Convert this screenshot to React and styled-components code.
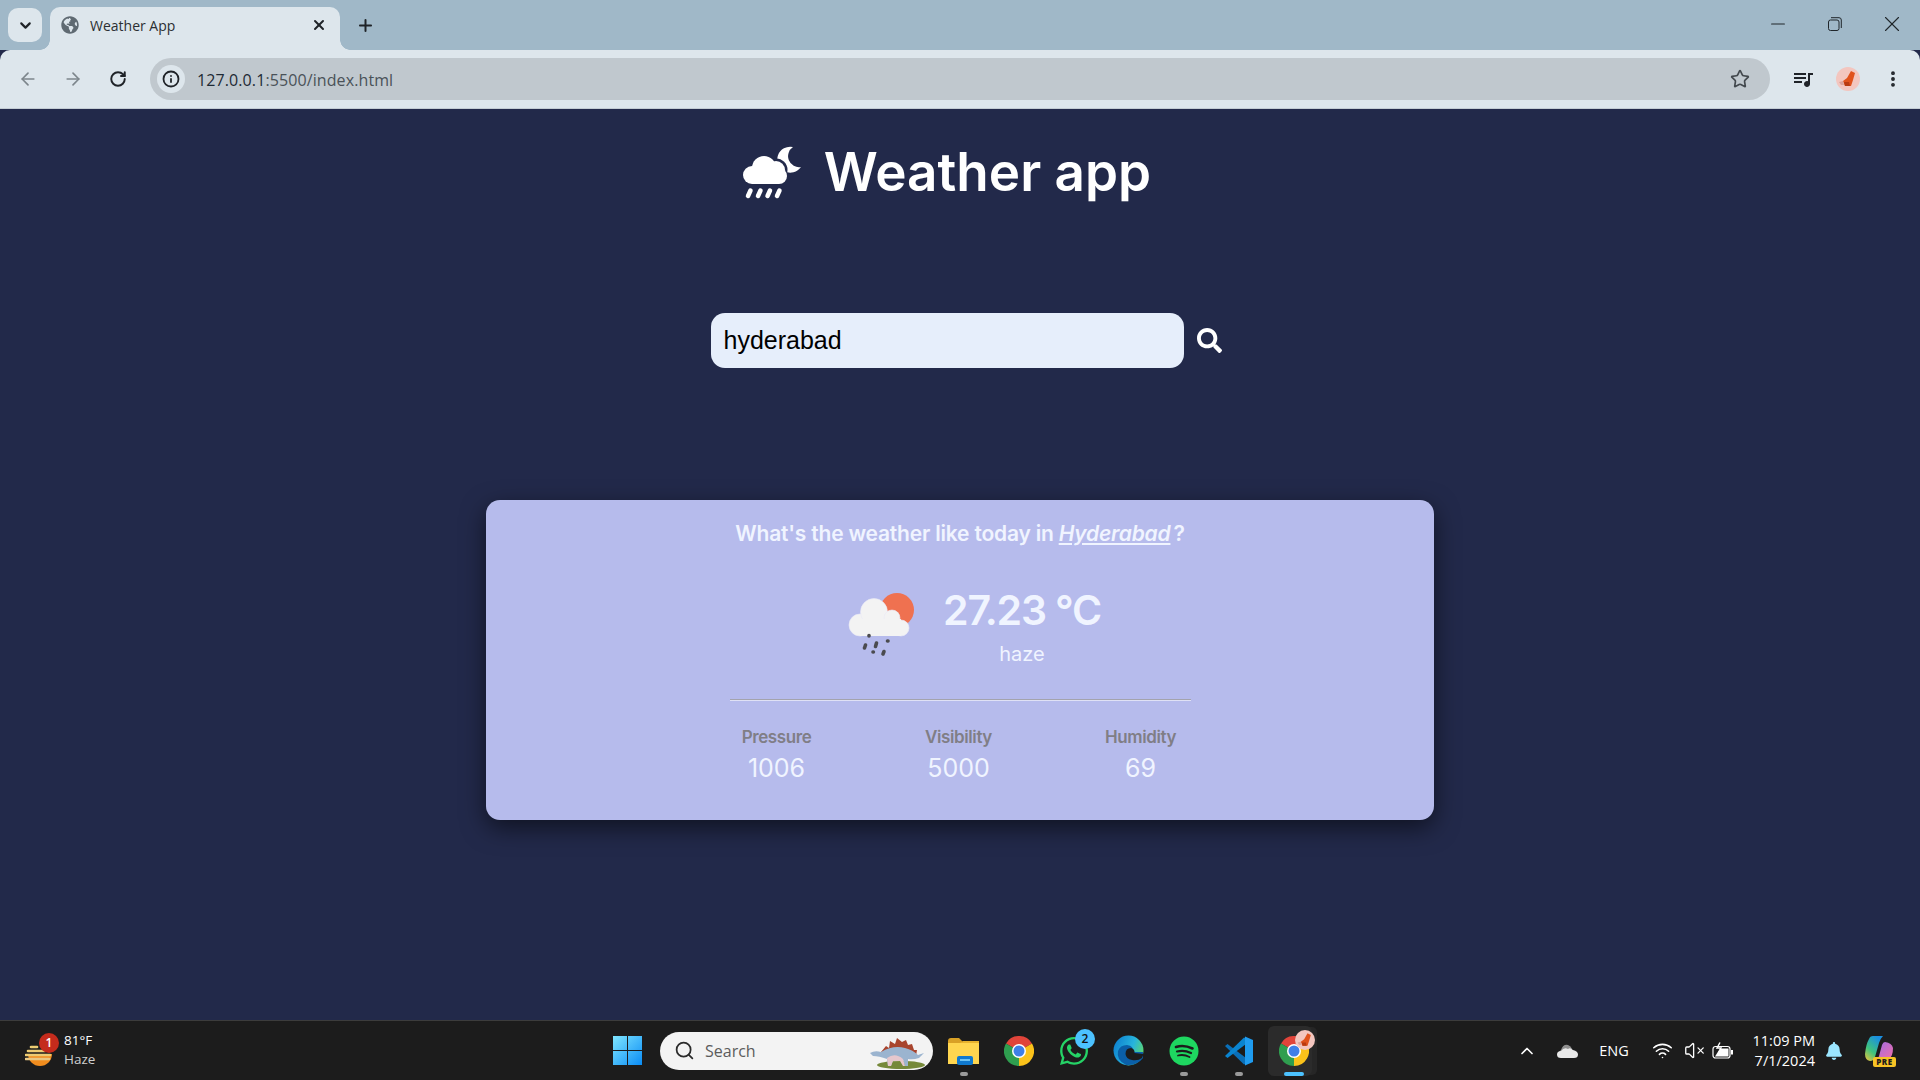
import React from 'react';
import styled, { createGlobalStyle } from 'styled-components';
import {
  ArrowLeft, ArrowRight, RotateCw, Star, EllipsisVertical, X, Plus, ChevronDown, ChevronUp,
  Minus, Search, Wifi, VolumeX, Info,
} from 'lucide-react';
import { FaSearch, FaWhatsapp, FaGlobeAmericas, FaBell } from 'react-icons/fa';
import { MdQueueMusic } from 'react-icons/md';

const GlobalStyle = createGlobalStyle`
  html, body { margin: 0; padding: 0; height: 100%; background: #22294a; }
  * { box-sizing: border-box; }
  #root { height: 1080px; }
`;

const Screen = styled.div`
  width: 1920px;
  height: 1080px;
  display: flex;
  flex-direction: column;
  overflow: hidden;
  font-family: 'Inter', sans-serif;
`;

/* browser chrome */
const TabStrip = styled.div`
  height: 50px;
  background: #a0b8c8;
  display: flex;
  align-items: flex-end;
  padding-left: 8px;
`;

const TabMenu = styled.div`
  width: 34px;
  height: 34px;
  margin-bottom: 8px;
  border-radius: 10px;
  background: #dde6ec;
  color: #1f2328;
  display: flex;
  align-items: center;
  justify-content: center;
`;

const Tab = styled.div`
  position: relative;
  width: 290px;
  height: 43px;
  margin-left: 8px;
  padding: 0 13px 7px 11px;
  background: #dde6ec;
  border-radius: 10px 10px 0 0;
  display: flex;
  align-items: center;
  color: #5f6a72;
  &:before, &:after {
    content: '';
    position: absolute;
    bottom: 0;
    width: 10px;
    height: 10px;
  }
  &:before {
    left: -10px;
    background: radial-gradient(circle at 0 0, #a0b8c8 9.5px, #dde6ec 10px);
  }
  &:after {
    right: -10px;
    background: radial-gradient(circle at 100% 0, #a0b8c8 9.5px, #dde6ec 10px);
  }
`;

const TabTitle = styled.span`
  flex: 1;
  margin-left: 11px;
  font: 14px 'Open Sans', sans-serif;
  color: #2b2f33;
`;

const NewTab = styled.div`
  width: 30px;
  height: 30px;
  margin: 0 0 10px 10px;
  color: #1f2328;
  display: flex;
  align-items: center;
  justify-content: center;
`;

const WindowButtons = styled.div`
  margin-left: auto;
  height: 50px;
  display: flex;
  align-items: center;
  color: #20262b;
`;

const WindowButton = styled.div`
  width: 57px;
  height: 40px;
  margin-bottom: 2px;
  display: flex;
  align-items: center;
  justify-content: center;
`;

const Toolbar = styled.div`
  position: relative;
  height: 59px;
  background: #dde6ec;
  border-radius: 10px 10px 0 0;
  border-bottom: 1px solid #c3ccd3;
  display: flex;
  align-items: center;
  padding: 0 0 1px 0;
`;

const NavButton = styled.div`
  width: 45px;
  height: 40px;
  flex: none;
  display: flex;
  align-items: center;
  justify-content: center;
  color: ${props => props.$dim ? '#7d868c' : '#1f2328'};
`;

const NavGroup = styled.div`
  display: flex;
  padding-left: 5px;
  width: 150px;
`;

const Omnibox = styled.div`
  width: 1620px;
  height: 42px;
  border-radius: 21px;
  background: #c0c8ce;
  display: flex;
  align-items: center;
  padding: 0 20px 0 7px;
`;

const InfoChip = styled.div`
  width: 28px;
  height: 28px;
  border-radius: 50%;
  background: #dde6ec;
  color: #1f2328;
  display: flex;
  align-items: center;
  justify-content: center;
`;

const UrlText = styled.span`
  margin-left: 12px;
  padding-top: 2px;
  flex: 1;
  font: 16px 'Open Sans', sans-serif;
  color: #1e2a35;
  letter-spacing: 0.1px;
  span { color: #4a5258; }
`;

const ToolIcons = styled.div`
  display: flex;
  align-items: center;
  margin-left: 10px;
  color: #1f2328;
`;

const ToolIcon = styled.div`
  width: 45px;
  height: 40px;
  display: flex;
  align-items: center;
  justify-content: center;
`;

/* page */
const Main = styled.main`
  flex: 1;
  background: #22294a;
  display: flex;
  flex-direction: column;
  align-items: center;
`;

const Header = styled.header`
  height: 80px;
  margin-top: 23px;
  padding-right: 26px;
  display: flex;
  align-items: center;
  gap: 23px;
`;

const Title = styled.h1`
  margin: 0;
  font-family: 'Inter', sans-serif;
  font-size: 53px;
  font-weight: 600;
  letter-spacing: 0;
  line-height: 80px;
  color: #fff;
`;

const SearchRow = styled.form`
  margin-top: 101px;
  padding-left: 12px;
  display: flex;
  align-items: center;
  gap: 13px;
  color: #fff;
`;

const CityInput = styled.input`
  width: 473px;
  height: 55px;
  border: 0;
  outline: 0;
  border-radius: 14px;
  padding: 0 13px;
  background: #e6eefb;
  color: #000;
  font: 25px 'Liberation Sans', Arial, sans-serif;
`;

const Card = styled.section`
  width: 948px;
  height: 320px;
  margin-top: 132px;
  padding-top: 20px;
  border-radius: 14px;
  background: #b6bbec;
  box-shadow: 0 8px 24px rgba(0, 0, 0, 0.55);
  display: flex;
  flex-direction: column;
  align-items: center;
`;

const Question = styled.h2`
  margin: 0;
  height: 28px;
  font-size: 21px;
  line-height: 28px;
  font-weight: 600;
  letter-spacing: -0.2px;
  color: #f0f4ff;
  em { text-decoration: underline; margin-right: 3px; }
`;

const NowRow = styled.div`
  margin-top: 34px;
  margin-left: 28px;
  display: flex;
  gap: 28px;
`;

const IconSlot = styled.div`
  margin-top: 9px;
  line-height: 0;
`;

const NowText = styled.div`
  width: 156px;
  display: flex;
  flex-direction: column;
  align-items: center;
`;

const Temp = styled.div`
  height: 56px;
  font-size: 41px;
  line-height: 56px;
  font-weight: 600;
  letter-spacing: -1.2px;
  white-space: nowrap;
  color: #f0f4ff;
`;

const Condition = styled.div`
  margin-top: 4px;
  font-size: 20px;
  line-height: 24px;
  color: #f0f4ff;
`;

const Divider = styled.hr`
  width: 461px;
  height: 1px;
  margin: 33px 0 0;
  border: 0;
  background: #a3a3ad;
  box-shadow: 0 1px 0 #dfe1f5;
`;

const Stats = styled.div`
  margin-top: 25px;
  margin-right: 3px;
  display: grid;
  grid-template-columns: repeat(3, 182px);
`;

const Stat = styled.div`
  display: flex;
  flex-direction: column;
  align-items: center;
`;

const StatLabel = styled.div`
  font-size: 17px;
  line-height: 24px;
  font-weight: 600;
  letter-spacing: -0.4px;
  color: #807e86;
`;

const StatValue = styled.div`
  margin-top: 4px;
  font-size: 25px;
  line-height: 30px;
  color: #f0f4ff;
`;

/* taskbar */
const Taskbar = styled.footer`
  position: relative;
  height: 60px;
  background: #1c1c1c;
  border-top: 1px solid #3c3c3c;
  display: grid;
  grid-template-columns: 613px 1fr auto;
  color: #fff;
  font-family: 'Open Sans', sans-serif;
`;

const WeatherWidget = styled.div`
  padding-left: 25px;
  display: flex;
  align-items: center;
  gap: 9px;
`;

const WidgetIcon = styled.div`
  position: relative;
  width: 30px;
  height: 30px;
`;

const CountBadge = styled.span`
  position: absolute;
  top: ${props => props.$top}px;
  right: ${props => props.$right}px;
  width: 20px;
  height: 20px;
  border-radius: 50%;
  background: ${props => props.$bg};
  color: ${props => props.$fg};
  font: 600 12px/20px 'Open Sans', sans-serif;
  text-align: center;
`;

const WidgetText = styled.div`
  font-size: 13.5px;
  line-height: 19px;
  margin-top: -2px;
  span { display: block; color: #cfcfcf; }
`;

const TaskCenter = styled.div`
  display: flex;
  align-items: center;
`;

const SearchPill = styled.div`
  width: 273px;
  height: 38px;
  margin-left: 18px;
  margin-right: 3px;
  padding: 0 7px 0 14px;
  border-radius: 19px;
  background: #f3f3f3;
  color: #2b2b2b;
  display: flex;
  align-items: center;
`;

const PillText = styled.span`
  flex: 1;
  margin-left: 10px;
  font-size: 16px;
  color: #5c5c5c;
`;

const TaskItem = styled.div`
  position: relative;
  width: 55px;
  height: 50px;
  flex: none;
  display: flex;
  align-items: center;
  justify-content: center;
  &:before {
    content: '';
    display: ${props => props.$active ? 'block' : 'none'};
    position: absolute;
    top: 0;
    bottom: 0;
    left: 2px;
    right: 9px;
    border-radius: 6px;
    background: #2b2b2b;
    box-shadow: 6px 0 0 -1px #262626;
  }
  > svg { position: relative; }
  &:after {
    content: '';
    display: ${props => props.$dot ? 'block' : 'none'};
    position: absolute;
    left: 50%;
    bottom: 0;
    transform: translateX(-50%);
    width: ${props => props.$active ? '20px' : '8px'};
    height: 4px;
    border-radius: 2px;
    background: ${props => props.$active ? '#4cc2ff' : '#9a9a9a'};
  }
`;

const Tray = styled.div`
  display: flex;
  align-items: center;
  padding-right: 25px;
`;

const TrayIcon = styled.div`
  width: ${props => props.$w}px;
  display: flex;
  justify-content: center;
  font-size: 14.5px;
  color: #fff;
`;

const Clock = styled.div`
  width: 80px;
  text-align: right;
  font-size: 14.5px;
  line-height: 20px;
  padding-right: 1px;
  margin-right: 4px;
`;

const PreTag = styled.span`
  position: absolute;
  right: -1px;
  bottom: -1px;
  width: 23px;
  height: 10px;
  border-radius: 2px;
  background: #f7c325;
  color: #1c1c1c;
  font: 800 8px/10px 'Open Sans', sans-serif;
  letter-spacing: 0.5px;
  text-align: center;
`;

const CopilotBox = styled.div`
  position: relative;
  width: 30px;
  height: 30px;
  margin-left: 17px;
`;

const Corner = styled.div`
  position: absolute;
  top: ${props => props.$top}px;
  left: ${props => props.$left}px;
  line-height: 0;
`;

/* drawings */
const LogoIcon = () => (
  <svg width="58" height="53" viewBox="0 0 58 53">
    <path d="M50 1 A13 13 0 1 0 58 21 A11 11 0 0 1 50 1 Z" fill="#fff" />
    <circle cx="33" cy="24" r="11.5" fill="#22294a" />
    <g fill="#fff">
      <circle cx="9" cy="29" r="9" />
      <circle cx="21" cy="22" r="12" />
      <circle cx="33" cy="24" r="9" />
      <circle cx="36" cy="30" r="8" />
      <rect x="9" y="25" width="27" height="13" />
    </g>
    <g stroke="#fff" strokeWidth="4.5" strokeLinecap="round">
      <path d="M5 50 L7.5 44.5" />
      <path d="M15 50 L17.5 44.5" />
      <path d="M24.5 50 L27 44.5" />
      <path d="M34 50 L36.5 44.5" />
    </g>
  </svg>
);

const HazeIcon = () => (
  <svg width="68" height="66" viewBox="18 20 68 66">
    <circle cx="67" cy="39" r="17" fill="#ef7150" />
    <g fill="#f3f3f3" stroke="#e9e9f6" strokeWidth="0.6">
      <circle cx="30" cy="54" r="11" />
      <circle cx="44" cy="41" r="13.5" />
      <circle cx="62" cy="47" r="8" />
      <circle cx="71" cy="57" r="8" />
      <rect x="30" y="48" width="41" height="17" strokeWidth="0" />
    </g>
    <g stroke="#4b4b4f" strokeWidth="3.6" strokeLinecap="round">
      <path d="M39 64.5 L39 65" />
      <path d="M34.5 77 L35.5 74" />
      <path d="M45.5 75.5 L46.5 72" />
      <path d="M57.5 70 L58 70" />
      <path d="M43 81 L43.4 81" />
      <path d="M53 83 L54 80.5" />
    </g>
  </svg>
);

const HazeSmall = () => (
  <svg width="30" height="30" viewBox="0 0 30 30">
    <path d="M3 17 H27 A12 12 0 0 1 3 17 Z" fill="#f08c1e" transform="translate(0,1)" />
    <g stroke="#eccb72" strokeWidth="2.6" strokeLinecap="round">
      <path d="M6 11 H12" />
      <path d="M3 15 H20" />
      <path d="M1 19 H25" />
      <path d="M1 23 H24" stroke="#e8c884" />
    </g>
  </svg>
);

const WindowsLogo = () => (
  <svg width="29" height="29" viewBox="0 0 29 29">
    <defs>
      <linearGradient id="winGrad" x1="0" y1="0" x2="1" y2="1">
        <stop offset="0" stopColor="#7fe6ff" />
        <stop offset="1" stopColor="#0a8cf5" />
      </linearGradient>
    </defs>
    <path d="M0 0 H14 V14 H0 Z M15 0 H29 V14 H15 Z M0 15 H14 V29 H0 Z M15 15 H29 V29 H15 Z" fill="url(#winGrad)" />
  </svg>
);

const Dino = () => (
  <svg width="57" height="38" viewBox="0 0 57 38">
    <ellipse cx="32" cy="33" rx="24" ry="4" fill="#76893a" />
    <g fill="#a8452e">
      <path d="M12 20 L17 14 L20 16 L21 9 L26 12 L28 6 L33 10 L37 8 L39 13 L43 12 L45 18 L48 18 L47 24 L16 24 Z" />
    </g>
    <path d="M1 21 Q6 18 12 20 Q24 13 36 16 Q44 18 49 23 L55 21 L50 26 Q44 28 39 27 L39 34 L36 34 L34 28 L24 28 L22 34 L19 34 L18 27 Q10 24 4 24 Z" fill="#9bb4cf" />
    <path d="M18 26 Q26 20 34 27 L36 34 L34 34 L31 29 L24 29 L22 34 L19 34 Z" fill="#e6c7cd" />
  </svg>
);

const Explorer = () => (
  <svg width="31" height="28" viewBox="0 0 31 28">
    <path d="M0 4 Q0 1 3 1 H11 L15 5 H29 V12 H0 Z" fill="#d9a126" />
    <path d="M0 6 H31 V27 H0 Z" fill="#ffd64f" />
    <path d="M0 6 H12 L15 4 H31 V6 Z" fill="#e8b32e" />
    <rect x="9" y="19" width="16" height="9" rx="2" fill="#0f79cf" />
    <rect x="12" y="22" width="10" height="2" fill="#6cc3f5" />
  </svg>
);

const ChromeLogo = ({ size = 30 }) => (
  <svg width={size} height={size} viewBox="0 0 30 30">
    <path d="M15 15 L2 7.5 A15 15 0 0 1 28 7.5 Z" fill="#e1443a" />
    <path d="M15 15 L2 7.5 A15 15 0 0 0 15 30 Z" fill="#2f9e4f" />
    <path d="M15 15 L28 7.5 A15 15 0 0 1 15 30 Z" fill="#fbc21a" />
    <circle cx="15" cy="15" r="7" fill="#fff" />
    <circle cx="15" cy="15" r="5.5" fill="#3f7fe8" />
  </svg>
);

const EdgeLogo = () => (
  <svg width="31" height="31" viewBox="0 0 31 31">
    <defs>
      <linearGradient id="edgeGrad" x1="0" y1="0.2" x2="1" y2="0.6">
        <stop offset="0" stopColor="#0d7fd0" />
        <stop offset="0.6" stopColor="#27b4dc" />
        <stop offset="1" stopColor="#5fd86a" />
      </linearGradient>
    </defs>
    <circle cx="15.5" cy="15.5" r="15" fill="url(#edgeGrad)" />
    <path d="M13 30 Q3 25 5 16 Q7 10 14 10 Q21 11 20 17 L30 17 L30 23 Q24 31 13 30 Z" fill="#0a5fa8" />
    <path d="M12.5 19 Q12.5 13 18 13 Q22 14 21.5 18 L30.5 19 L29 23 Q25 26 19 25 Q13 24 12.5 19 Z" fill="#1c1c1c" />
  </svg>
);

const SpotifyLogo = () => (
  <svg width="30" height="30" viewBox="0 0 30 30">
    <circle cx="15" cy="15" r="14.5" fill="#1ed760" />
    <g fill="none" stroke="#1c1c1c" strokeLinecap="round">
      <path d="M7 11 Q15 8.5 23.5 12.5" strokeWidth="2.6" />
      <path d="M8 15.5 Q15 13.5 22 17" strokeWidth="2.2" />
      <path d="M9 19.5 Q15 18 20.5 21" strokeWidth="1.8" />
    </g>
  </svg>
);

const VsCodeLogo = () => (
  <svg width="30" height="30" viewBox="0 0 30 30">
    <path d="M1 10 L3.5 8 L22 22 V27.5 L20 28.5 Z" fill="#0a6fb8" />
    <path d="M1 20 L3.5 22 L22 8 V2.5 L20 1.5 Z" fill="#0a84d0" />
    <path d="M21 0.5 L29 4 V26 L21 29.5 Z" fill="#1f9cf0" />
  </svg>
);

const Avatar = ({ size }) => (
  <svg width={size} height={size} viewBox="0 0 24 24">
    <circle cx="12" cy="12" r="12" fill="#f3c6bf" />
    <path d="M15 4 L19 6 L17 13 L15 19 L9 19 L7 14 L11 11 Z" fill="#e0521c" />
    <path d="M9 19 L8 15 L13 15 L14 19 Z" fill="#b93a10" />
    <path d="M3 15 L7 14 L8 18 L5 18 Z" fill="#dba39b" />
  </svg>
);

const RestoreIcon = () => (
  <svg width="14" height="14" viewBox="0 0 14 14" fill="none" stroke="currentColor" strokeWidth="1">
    <rect x="0.5" y="3" width="10.5" height="10.5" rx="2" />
    <path d="M3 0.7 H11 Q13.3 0.7 13.3 3 V11" />
  </svg>
);

const OneDrive = () => (
  <svg width="21" height="14" viewBox="0 0 21 14">
    <path d="M4 6 Q6 0 11 1 Q14 2 15 5 L8 9 L2 8 Z" fill="#8f8f8f" />
    <path d="M4 14 Q0 14 0 10.5 Q0 7 4 7 Q7 3 11 5 Q13 3 16 6 Q21 7 21 10.5 Q21 14 17 14 Z" fill="#e8e8e8" />
  </svg>
);

const BatteryIcon = () => (
  <svg width="21" height="18" viewBox="0 0 21 18" fill="none" stroke="#fff" strokeWidth="1.2">
    <rect x="1" y="4.5" width="17" height="11.5" rx="2.5" />
    <path d="M20 8 V12.5" strokeWidth="2" />
    <path d="M3 14.5 L8 6.5 H16.5 V14.5 Z" fill="#fff" stroke="none" />
    <path d="M8 0.5 L5 6 H9 L6.5 11" strokeWidth="1.4" stroke="#fff" />
  </svg>
);

const CopilotLogo = () => (
  <svg width="28" height="26" viewBox="0 0 28 26">
    <defs>
      <linearGradient id="copA" x1="0" y1="1" x2="0.6" y2="0">
        <stop offset="0" stopColor="#f4c33a" />
        <stop offset="0.45" stopColor="#3fc47d" />
        <stop offset="1" stopColor="#1a8fe0" />
      </linearGradient>
      <linearGradient id="copB" x1="0" y1="0" x2="1" y2="1">
        <stop offset="0" stopColor="#9a6be8" />
        <stop offset="1" stopColor="#f26ea6" />
      </linearGradient>
    </defs>
    <path d="M8 0 H18 Q15 3 14 7 L10 21 Q9 25 5 25 Q0 24 0 18 Q1 8 4 3 Q5 0 8 0 Z" fill="url(#copA)" />
    <path d="M20 6 Q27 7 28 12 Q28 20 24 23 Q22 25 18 25 H9 Q13 24 14 20 L17 9 Q18 6 20 6 Z" fill="url(#copB)" />
  </svg>
);

export default function App() {
  return (
    <Screen>
      <GlobalStyle />
      <TabStrip>
        <TabMenu><ChevronDown size={17} strokeWidth={3} /></TabMenu>
        <Tab>
          <FaGlobeAmericas size={18} />
          <TabTitle>Weather App</TabTitle>
          <X size={16} strokeWidth={3} color="#1f2328" />
        </Tab>
        <NewTab><Plus size={19} strokeWidth={2.5} /></NewTab>
        <WindowButtons>
          <WindowButton><Minus size={22} strokeWidth={1.1} /></WindowButton>
          <WindowButton><RestoreIcon /></WindowButton>
          <WindowButton><X size={26} strokeWidth={1} /></WindowButton>
        </WindowButtons>
      </TabStrip>
      <Toolbar>
        <NavGroup>
          <NavButton $dim><ArrowLeft size={20} /></NavButton>
          <NavButton $dim><ArrowRight size={20} /></NavButton>
          <NavButton><RotateCw size={18} strokeWidth={2.6} /></NavButton>
        </NavGroup>
        <Omnibox>
          <InfoChip><Info size={18} strokeWidth={2.4} /></InfoChip>
          <UrlText>127.0.0.1<span>:5500/index.html</span></UrlText>
          <Star size={20} color="#43494e" strokeWidth={2} />
        </Omnibox>
        <ToolIcons>
          <ToolIcon><MdQueueMusic size={24} /></ToolIcon>
          <ToolIcon><Avatar size={24} /></ToolIcon>
          <ToolIcon><EllipsisVertical size={20} strokeWidth={2.6} /></ToolIcon>
        </ToolIcons>
      </Toolbar>

      <Main>
        <Header>
          <LogoIcon />
          <Title>Weather app</Title>
        </Header>
        <SearchRow onSubmit={e => e.preventDefault()}>
          <CityInput defaultValue="hyderabad" />
          <FaSearch size={25} />
        </SearchRow>
        <Card>
          <Question>What's the weather like today in <em>Hyderabad</em>?</Question>
          <NowRow>
            <IconSlot><HazeIcon /></IconSlot>
            <NowText>
              <Temp>27.23 °C</Temp>
              <Condition>haze</Condition>
            </NowText>
          </NowRow>
          <Divider />
          <Stats>
            <Stat><StatLabel>Pressure</StatLabel><StatValue>1006</StatValue></Stat>
            <Stat><StatLabel>Visibility</StatLabel><StatValue>5000</StatValue></Stat>
            <Stat><StatLabel>Humidity</StatLabel><StatValue>69</StatValue></Stat>
          </Stats>
        </Card>
      </Main>

      <Taskbar>
        <WeatherWidget>
          <WidgetIcon>
            <HazeSmall />
            <CountBadge $top={-3} $right={-4} $bg="#c42b1c" $fg="#fff">1</CountBadge>
          </WidgetIcon>
          <WidgetText>81°F<span>Haze</span></WidgetText>
        </WeatherWidget>
        <TaskCenter>
          <WindowsLogo />
          <SearchPill>
            <Search size={21} strokeWidth={2} />
            <PillText>Search</PillText>
            <Dino />
          </SearchPill>
          <TaskItem $dot><Explorer /></TaskItem>
          <TaskItem><ChromeLogo /></TaskItem>
          <TaskItem>
            <FaWhatsapp size={32} color="#25d366" />
            <CountBadge $top={3} $right={6} $bg="#4cc2ff" $fg="#111">2</CountBadge>
          </TaskItem>
          <TaskItem><EdgeLogo /></TaskItem>
          <TaskItem $dot><SpotifyLogo /></TaskItem>
          <TaskItem $dot><VsCodeLogo /></TaskItem>
          <TaskItem $dot $active>
            <ChromeLogo />
            <Corner $top={4} $left={29}><Avatar size={20} /></Corner>
          </TaskItem>
        </TaskCenter>
        <Tray>
          <TrayIcon $w={44}><ChevronUp size={20} strokeWidth={2} /></TrayIcon>
          <TrayIcon $w={36}><OneDrive /></TrayIcon>
          <TrayIcon $w={58}>ENG</TrayIcon>
          <TrayIcon $w={38}><Wifi size={21} strokeWidth={1.8} /></TrayIcon>
          <TrayIcon $w={27}><VolumeX size={21} strokeWidth={1.5} /></TrayIcon>
          <TrayIcon $w={28}><BatteryIcon /></TrayIcon>
          <Clock>11:09 PM<br />7/1/2024</Clock>
          <TrayIcon $w={28}><FaBell size={18} color="#9be6ff" /></TrayIcon>
          <CopilotBox>
            <CopilotLogo />
            <PreTag>PRE</PreTag>
          </CopilotBox>
        </Tray>
      </Taskbar>
    </Screen>
  );
}
